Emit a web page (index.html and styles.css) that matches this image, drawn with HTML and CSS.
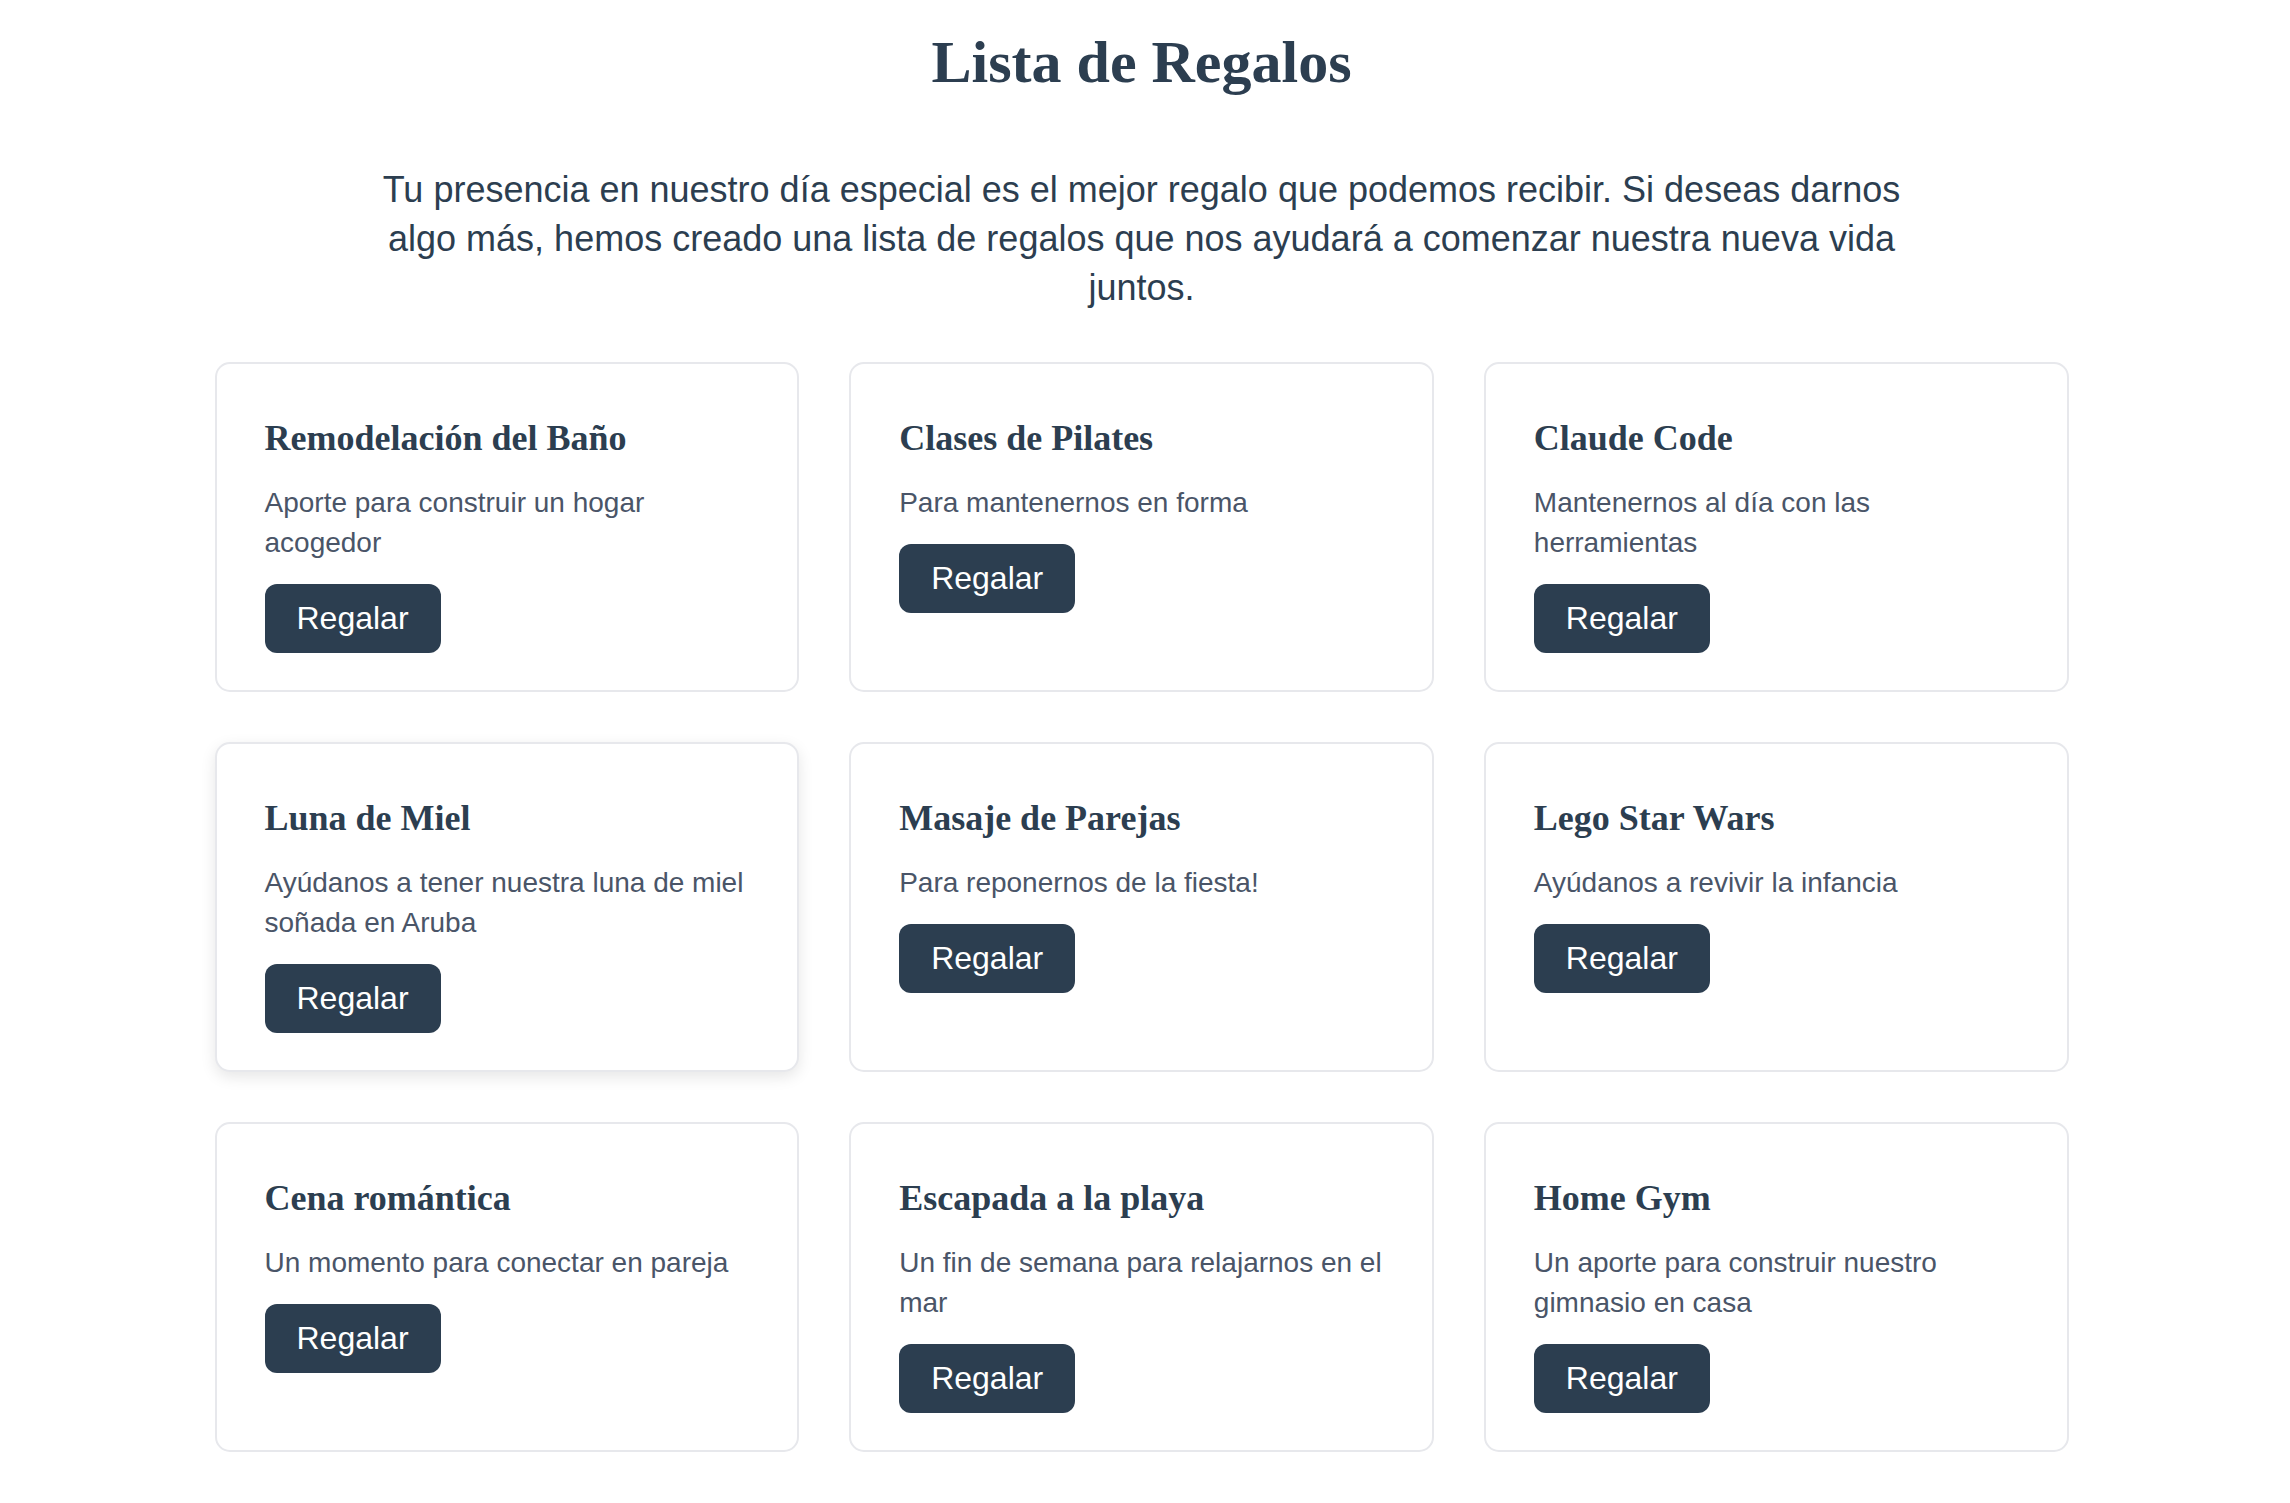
FILE: index.html
```html
<!DOCTYPE html>
<html lang="es">
<head>
<meta charset="utf-8">
<title>Lista de Regalos</title>
<link rel="stylesheet" href="styles.css">
</head>
<body>
<main class="page">
  <h1 class="page-title">Lista de Regalos</h1>
  <p class="intro">Tu presencia en nuestro día especial es el mejor regalo que podemos recibir. Si deseas darnos algo más, hemos creado una lista de regalos que nos ayudará a comenzar nuestra nueva vida juntos.</p>
  <section class="grid">
    <article class="card">
      <h3 class="card-title">Remodelación del Baño</h3>
      <p class="card-desc">Aporte para construir un hogar acogedor</p>
      <button class="btn">Regalar</button>
    </article>
    <article class="card">
      <h3 class="card-title">Clases de Pilates</h3>
      <p class="card-desc">Para mantenernos en forma</p>
      <button class="btn">Regalar</button>
    </article>
    <article class="card">
      <h3 class="card-title">Claude Code</h3>
      <p class="card-desc">Mantenernos al día con las herramientas</p>
      <button class="btn">Regalar</button>
    </article>
    <article class="card card-hover">
      <h3 class="card-title">Luna de Miel</h3>
      <p class="card-desc">Ayúdanos a tener nuestra luna de miel soñada en Aruba</p>
      <button class="btn">Regalar</button>
    </article>
    <article class="card">
      <h3 class="card-title">Masaje de Parejas</h3>
      <p class="card-desc">Para reponernos de la fiesta!</p>
      <button class="btn">Regalar</button>
    </article>
    <article class="card">
      <h3 class="card-title">Lego Star Wars</h3>
      <p class="card-desc">Ayúdanos a revivir la infancia</p>
      <button class="btn">Regalar</button>
    </article>
    <article class="card">
      <h3 class="card-title">Cena romántica</h3>
      <p class="card-desc">Un momento para conectar en pareja</p>
      <button class="btn">Regalar</button>
    </article>
    <article class="card">
      <h3 class="card-title">Escapada a la playa</h3>
      <p class="card-desc">Un fin de semana para relajarnos en el mar</p>
      <button class="btn">Regalar</button>
    </article>
    <article class="card">
      <h3 class="card-title">Home Gym</h3>
      <p class="card-desc">Un aporte para construir nuestro gimnasio en casa</p>
      <button class="btn">Regalar</button>
    </article>
  </section>
</main>
</body>
</html>
```
FILE: styles.css
```css
* { box-sizing: border-box; }

html, body {
  margin: 0;
  padding: 0;
  background: #ffffff;
}

body {
  padding-right: 7px;
  font-family: "Liberation Sans", Arial, sans-serif;
  color: #2c3e50;
}

.page {
  width: 1854px;
  margin: 0 auto;
  padding-top: 28px;
  padding-bottom: 51px;
}

.page-title {
  margin: 0;
  font-family: "Liberation Serif", "Times New Roman", serif;
  font-weight: 700;
  font-size: 60px;
  line-height: 69px;
  text-align: center;
  color: #2c3e50;
}

.intro {
  max-width: 1560px;
  margin: 68px auto 0;
  font-size: 36px;
  line-height: 49px;
  text-align: center;
  color: #2c3e50;
}

.grid {
  margin-top: 50px;
  display: grid;
  grid-template-columns: repeat(3, 1fr);
  gap: 50px;
}

.card {
  border: 2px solid #e7e8ec;
  border-radius: 15px;
  background: #ffffff;
  padding: 54px 48px 37px;
  display: flex;
  flex-direction: column;
  align-items: flex-start;
}

.card-hover {
  box-shadow: 0 5px 15px rgba(0, 0, 0, 0.1);
}

.card-title {
  margin: 0;
  font-family: "Liberation Serif", "Times New Roman", serif;
  font-weight: 700;
  font-size: 36px;
  line-height: 41px;
  color: #2c3e50;
}

.card-desc {
  margin: 24px 0 21px;
  font-size: 28px;
  line-height: 40px;
  color: #4a5568;
}

.btn {
  font-family: "Liberation Sans", Arial, sans-serif;
  font-size: 32px;
  line-height: 37px;
  padding: 16px 32px;
  border: none;
  border-radius: 12px;
  background: #2c3e50;
  color: #ffffff;
  cursor: pointer;
}
```
